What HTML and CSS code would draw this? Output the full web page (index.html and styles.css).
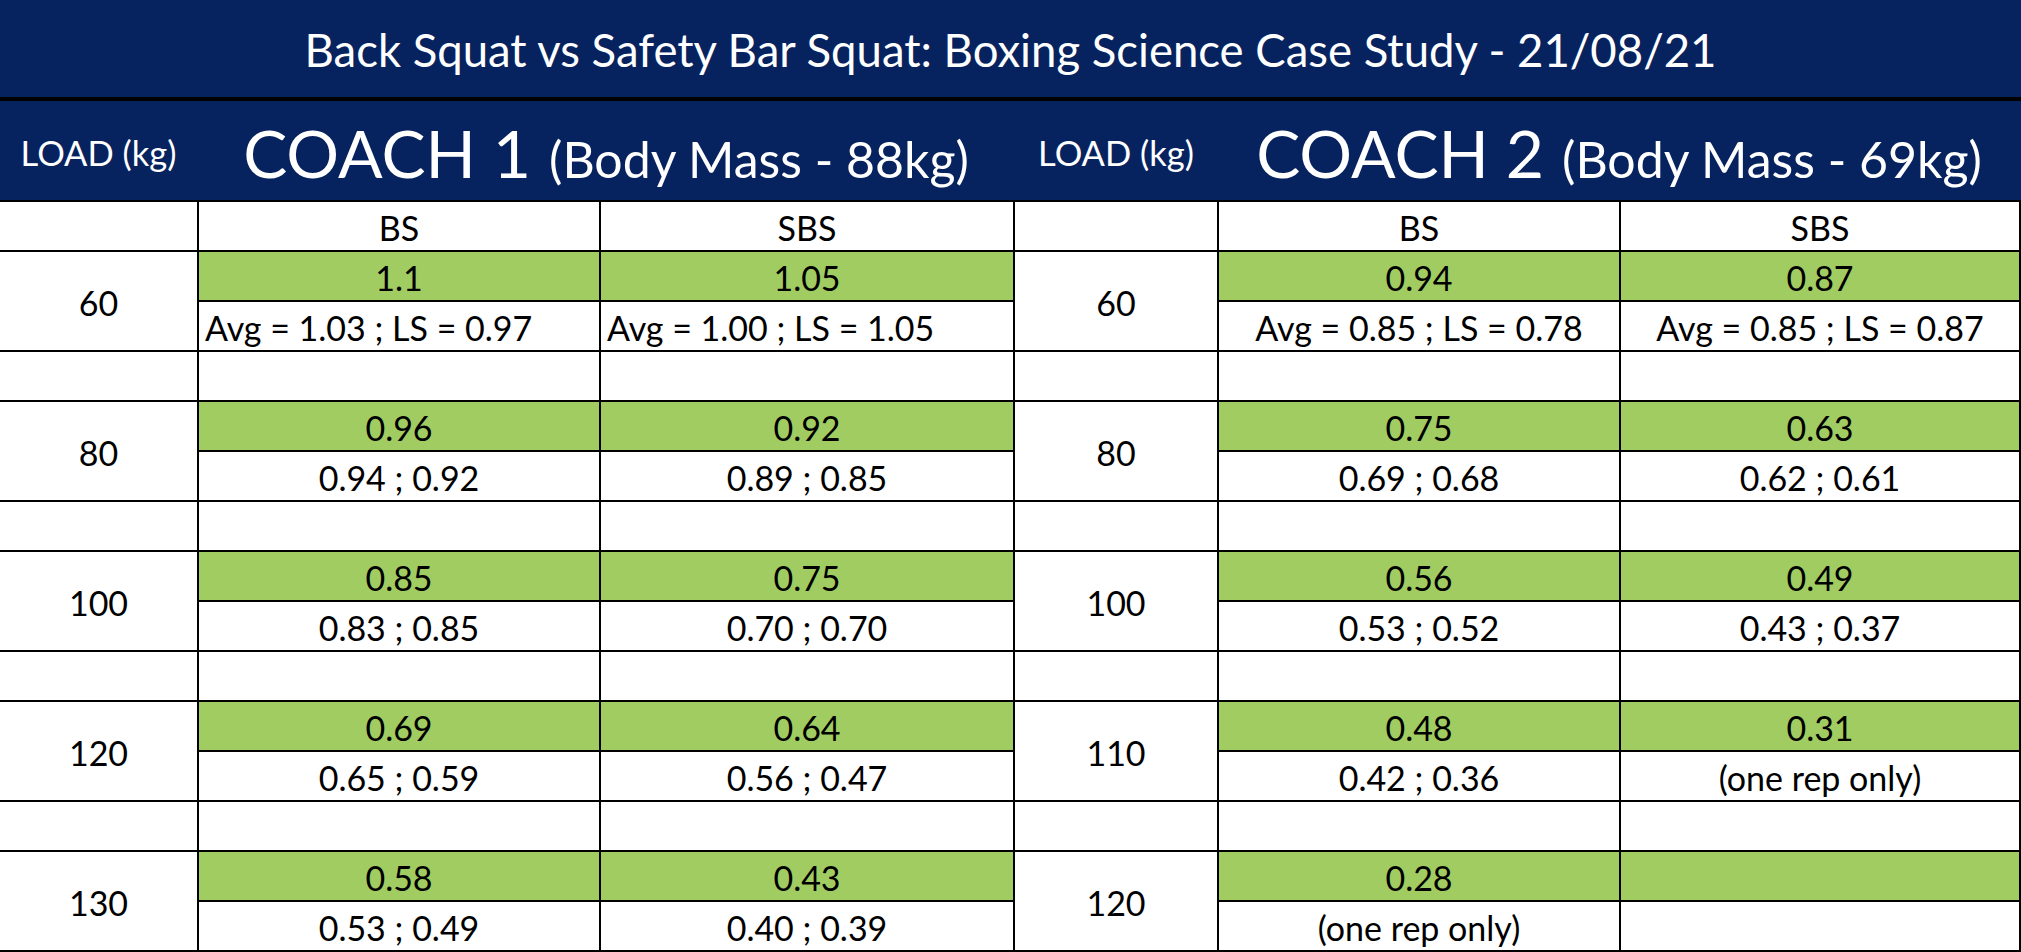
FILE: index.html
```html
<!DOCTYPE html>
<html lang="en">
<head>
<meta charset="utf-8">
<title>Back Squat vs Safety Bar Squat</title>
<link rel="stylesheet" href="styles.css">
</head>
<body>
<div class="sheet">
  <header class="title">Back Squat vs Safety Bar Squat: Boxing Science Case Study - 21/08/21</header>
  <div class="band">
    <div class="load-h">LOAD (kg)</div>
    <div class="coach-h"><span class="coach-name">COACH 1</span><span class="coach-mass">(Body Mass - 88kg)</span></div>
    <div class="load-h">LOAD (kg)</div>
    <div class="coach-h"><span class="coach-name">COACH 2</span><span class="coach-mass">(Body Mass - 69kg)</span></div>
  </div>
  <div class="grid">
    <div class="c"></div><div class="c">BS</div><div class="c">SBS</div><div class="c"></div><div class="c">BS</div><div class="c">SBS</div>

    <div class="c load">60</div><div class="c g">1.1</div><div class="c g">1.05</div><div class="c load">60</div><div class="c g">0.94</div><div class="c g">0.87</div>
    <div class="c left">Avg = 1.03 ; LS = 0.97</div><div class="c left">Avg = 1.00 ; LS = 1.05</div><div class="c">Avg = 0.85 ; LS = 0.78</div><div class="c">Avg = 0.85 ; LS = 0.87</div>
    <div class="c"></div><div class="c"></div><div class="c"></div><div class="c"></div><div class="c"></div><div class="c"></div>

    <div class="c load">80</div><div class="c g">0.96</div><div class="c g">0.92</div><div class="c load">80</div><div class="c g">0.75</div><div class="c g">0.63</div>
    <div class="c">0.94 ; 0.92</div><div class="c">0.89 ; 0.85</div><div class="c">0.69 ; 0.68</div><div class="c">0.62 ; 0.61</div>
    <div class="c"></div><div class="c"></div><div class="c"></div><div class="c"></div><div class="c"></div><div class="c"></div>

    <div class="c load">100</div><div class="c g">0.85</div><div class="c g">0.75</div><div class="c load">100</div><div class="c g">0.56</div><div class="c g">0.49</div>
    <div class="c">0.83 ; 0.85</div><div class="c">0.70 ; 0.70</div><div class="c">0.53 ; 0.52</div><div class="c">0.43 ; 0.37</div>
    <div class="c"></div><div class="c"></div><div class="c"></div><div class="c"></div><div class="c"></div><div class="c"></div>

    <div class="c load">120</div><div class="c g">0.69</div><div class="c g">0.64</div><div class="c load">110</div><div class="c g">0.48</div><div class="c g">0.31</div>
    <div class="c">0.65 ; 0.59</div><div class="c">0.56 ; 0.47</div><div class="c">0.42 ; 0.36</div><div class="c">(one rep only)</div>
    <div class="c"></div><div class="c"></div><div class="c"></div><div class="c"></div><div class="c"></div><div class="c"></div>

    <div class="c load">130</div><div class="c g">0.58</div><div class="c g">0.43</div><div class="c load">120</div><div class="c g">0.28</div><div class="c g"></div>
    <div class="c">0.53 ; 0.49</div><div class="c">0.40 ; 0.39</div><div class="c">(one rep only)</div><div class="c"></div>
  </div>
</div>
</body>
</html>
```

FILE: styles.css
```css
html, body {
  margin: 0;
  padding: 0;
  overflow: hidden;
  background: #ffffff;
}

body {
  font-family: Lato, "Open Sans", sans-serif;
  color: #000000;
  width: 2021px;
}

.sheet {
  width: 2021px;
}

.title {
  box-sizing: border-box;
  height: 101px;
  background: #07235f;
  color: #ffffff;
  border-bottom: 4px solid #000000;
  display: flex;
  align-items: center;
  justify-content: center;
  font-size: 45.5px;
  padding-top: 2px;
}

.band {
  display: grid;
  grid-template-columns: 197px 400px 412px 202px 400px 398px;
  column-gap: 2px;
  height: 99px;
  background: #07235f;
  color: #ffffff;
  border-bottom: 2px solid #000000;
}

.load-h {
  display: flex;
  align-items: center;
  justify-content: center;
  font-size: 34.5px;
  padding-top: 4px;
}

.coach-h {
  grid-column: span 2;
  display: flex;
  align-items: baseline;
  justify-content: center;
  gap: 18px;
  padding-top: 12px;
}

.coach-name {
  font-size: 66px;
}

.coach-mass {
  font-size: 50px;
}

.grid {
  display: grid;
  grid-template-columns: 197px 400px 412px 202px 400px 398px;
  grid-auto-rows: 48px;
  gap: 2px;
  background: #000000;
  padding-right: 2px;
  padding-bottom: 2px;
  font-size: 34px;
}

.c {
  background: #ffffff;
  display: flex;
  align-items: center;
  justify-content: center;
  padding-top: 3px;
  white-space: nowrap;
  box-sizing: border-box;
}

.g {
  background: #a1cc62;
}

.load {
  grid-row: span 2;
}

.left {
  justify-content: flex-start;
  padding-left: 6px;
}
```
